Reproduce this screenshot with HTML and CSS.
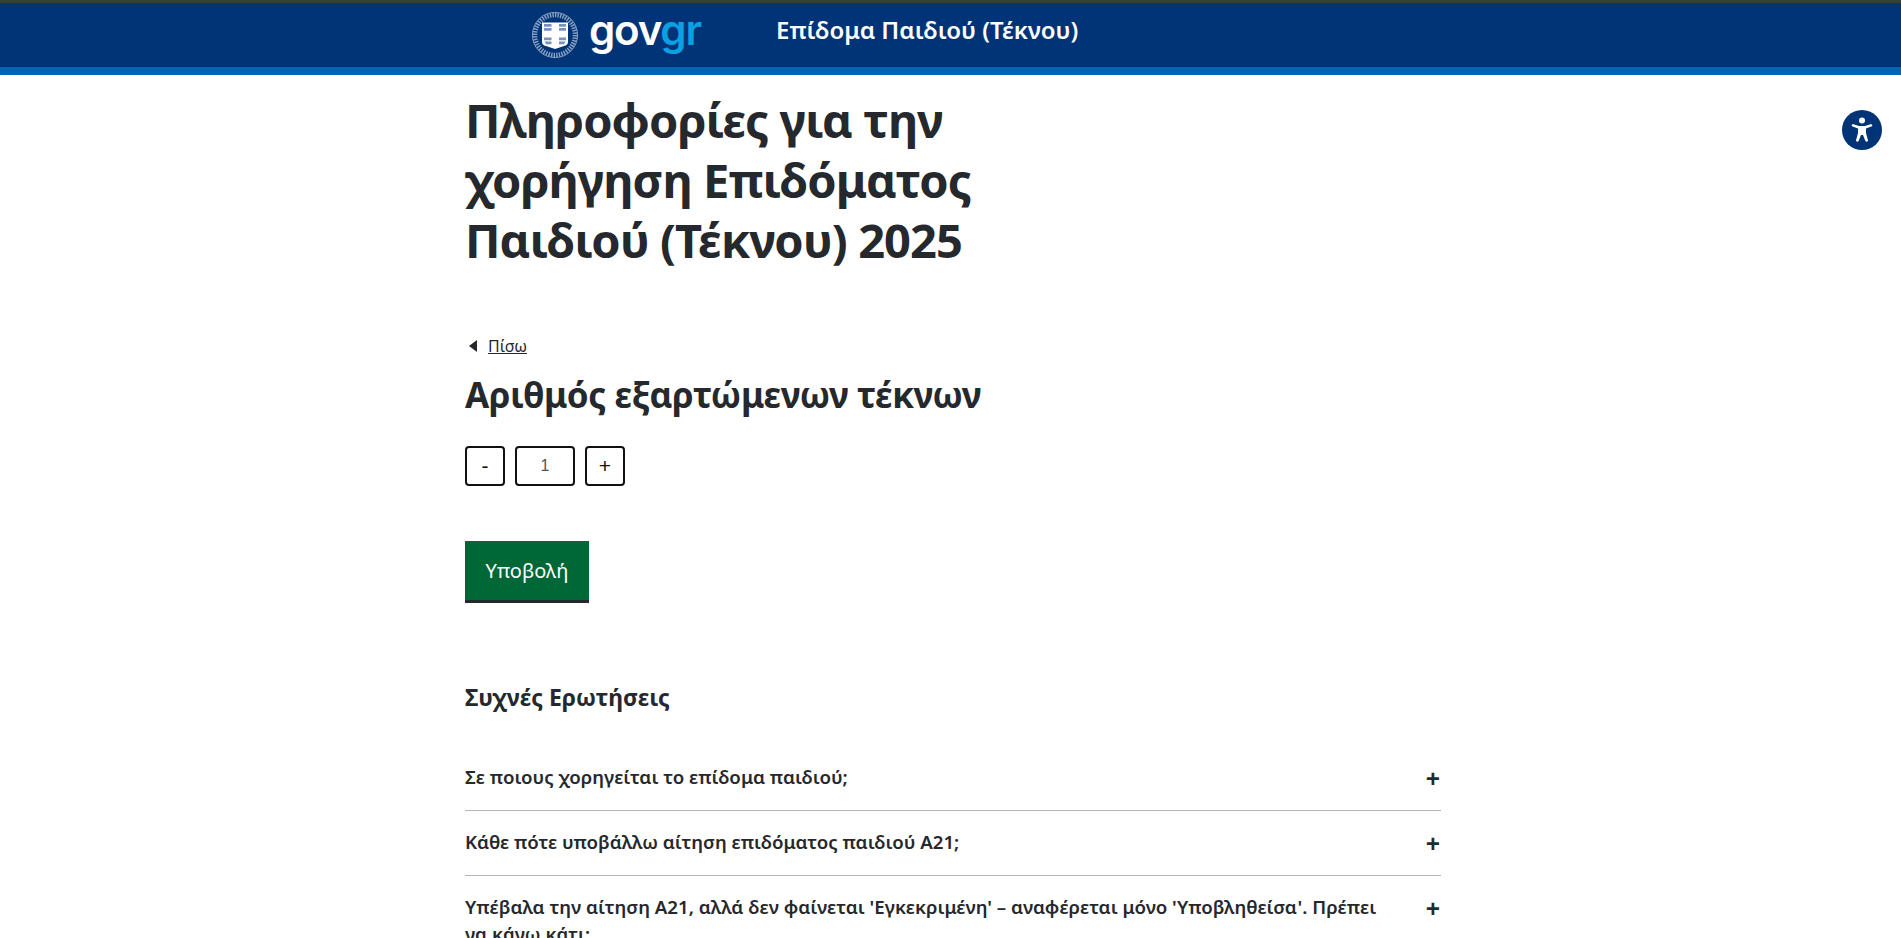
FILE: index.html
```html
<!DOCTYPE html>
<html lang="el">
<head>
<meta charset="utf-8">
<title>Επίδομα Παιδιού (Τέκνου)</title>
<link rel="stylesheet" href="styles.css">
</head>
<body>
<header class="site-header">
  <div class="header-inner">
    <a class="logo" href="#">
      <svg class="emblem" viewBox="0 0 48 48" width="48" height="48" aria-hidden="true">
        <circle cx="24" cy="24" r="20" fill="none" stroke="#8ea3c4" stroke-width="4.5" stroke-dasharray="1.4 1.2"/>
        <circle cx="24" cy="24" r="22.6" fill="none" stroke="#b9c6da" stroke-width=".7"/>
        <path d="M11 11.5H37V31Q37 34 33 35L24 38L15 35Q11 34 11 31Z" fill="#fff"/>
        <path d="M13 13H20.5V15.8H13ZM28 13H35V15.8H28ZM13 17H20.5V19.8H13ZM28 17H35V19.8H28ZM13 26.5H20.5V29.3H13ZM28 26.5H35V29.3H28ZM13.5 30.5H20.5V33.3H15ZM28 30.5H34.5L33 33.3H28Z" fill="#7b93b8"/>
      </svg>
      <span class="wordmark">gov<span class="wordmark-gr">gr</span></span>
    </a>
    <span class="service-name">Επίδομα Παιδιού (Τέκνου)</span>
  </div>
</header>
<button class="a11y-btn" aria-label="Προσβασιμότητα">
  <svg viewBox="0 0 40 40" width="40" height="40" aria-hidden="true">
    <circle cx="20" cy="20" r="20" fill="#003476"/>
    <circle cx="20" cy="10.5" r="3" fill="#fff"/>
    <path d="M10 14.5Q9.3 15.2 10 16.3L16 18.6V23L14 30.2Q14 31.6 15.2 31.8Q16.2 31.8 16.6 31L19 25H21L23.4 31Q23.8 31.8 24.8 31.8Q26 31.6 26 30.2L24 23V18.6L30 16.3Q30.7 15.2 30 14.5Q29.5 14 28.5 14.3L23 16H17L11.5 14.3Q10.5 14 10 14.5Z" fill="#fff"/>
  </svg>
</button>
<main class="content">
  <h1 class="page-title">Πληροφορίες για την χορήγηση Επιδόματος Παιδιού (Τέκνου) 2025</h1>
  <a class="back-link" href="#"><span class="back-arrow"></span><span class="back-text">Πίσω</span></a>
  <h2 class="question">Αριθμός εξαρτώμενων τέκνων</h2>
  <div class="stepper">
    <button class="step-btn">-</button>
    <input class="step-input" type="text" value="1">
    <button class="step-btn">+</button>
  </div>
  <button class="submit-btn">Υποβολή</button>
  <h3 class="faq-title">Συχνές Ερωτήσεις</h3>
  <div class="faq">
    <div class="faq-row"><span class="faq-q">Σε ποιους χορηγείται το επίδομα παιδιού;</span><span class="faq-plus">+</span></div>
    <div class="faq-row"><span class="faq-q">Κάθε πότε υποβάλλω αίτηση επιδόματος παιδιού Α21;</span><span class="faq-plus">+</span></div>
    <div class="faq-row"><span class="faq-q">Υπέβαλα την αίτηση Α21, αλλά δεν φαίνεται 'Εγκεκριμένη' – αναφέρεται μόνο 'Υποβληθείσα'. Πρέπει να κάνω κάτι;</span><span class="faq-plus">+</span></div>
  </div>
</main>
</body>
</html>
```
FILE: styles.css
```css
* { box-sizing: border-box; }
html, body { margin: 0; height: 938px; overflow: hidden; }
body { background: #fff; color: #25282d; font-family: "Noto Sans", "Open Sans", sans-serif; }

.site-header { height: 75px; background: #003476; border-top: 3px solid #3a3f38; border-bottom: 8px solid #0065b3; }
.header-inner { display: flex; align-items: center; height: 64px; padding-left: 531px; }
.logo { display: flex; align-items: center; color: #fff; text-decoration: none; width: 245px; }
.emblem { flex: none; margin-top: -1px; }
.wordmark { font-family: Inter, "Noto Sans", sans-serif; font-weight: 600; font-size: 42px; line-height: 48px; letter-spacing: -1.2px; margin-left: 10px; margin-top: -10px; }
.wordmark-gr { color: #0b9fe3; }
.service-name { color: #fff; font-size: 24px; font-weight: 600; margin-top: -12px; }

.a11y-btn { position: absolute; top: 110px; left: 1842px; width: 40px; height: 40px; padding: 0; border: 0; background: none; }

.content { width: 976px; margin-left: 465px; }
.page-title { width: 540px; margin: 15px 0 0; font-size: 47px; line-height: 60px; font-weight: 700; letter-spacing: -0.9px; }
.back-link { display: flex; align-items: center; margin-top: 64px; height: 24px; color: #25282d; font-size: 16px; }
.back-arrow { flex: none; width: 8px; height: 12px; margin-left: 4px; margin-right: 11px; background: #25282d; clip-path: polygon(100% 0, 100% 100%, 0 50%); }
.back-text { text-decoration: underline; }
.question { margin: 14px 0 0; font-size: 35px; line-height: 46px; font-weight: 700; letter-spacing: -0.4px; }
.stepper { display: flex; gap: 10px; margin-top: 28px; }
.step-btn, .step-input { height: 40px; background: #fff; border: 2px solid #111; border-radius: 4px; padding: 0; font-family: "Liberation Sans", sans-serif; font-size: 21px; color: #111; text-align: center; }
.step-btn { width: 40px; }
.step-input { width: 60px; font-size: 16px; color: #555; }
.submit-btn { display: block; width: 124px; height: 62px; margin-top: 55px; padding: 0; background: #006736; color: #fff; border: 0; border-bottom: 3px solid #25282d; font-family: "Noto Sans", sans-serif; font-size: 20px; }
.faq-title { margin: 78px 0 0; font-size: 23px; line-height: 32px; font-weight: 700; }
.faq { margin-top: 33px; }
.faq-row { display: flex; justify-content: space-between; align-items: flex-start; padding: 17px 0 0; border-bottom: 1px solid #b3b3b3; min-height: 65px; }
.faq-q { max-width: 925px; font-size: 18.7px; line-height: 27px; font-weight: 600; }
.faq-plus { font-size: 25px; line-height: 32px; font-weight: 700; margin-right: 1px; margin-top: -1px; }
```
